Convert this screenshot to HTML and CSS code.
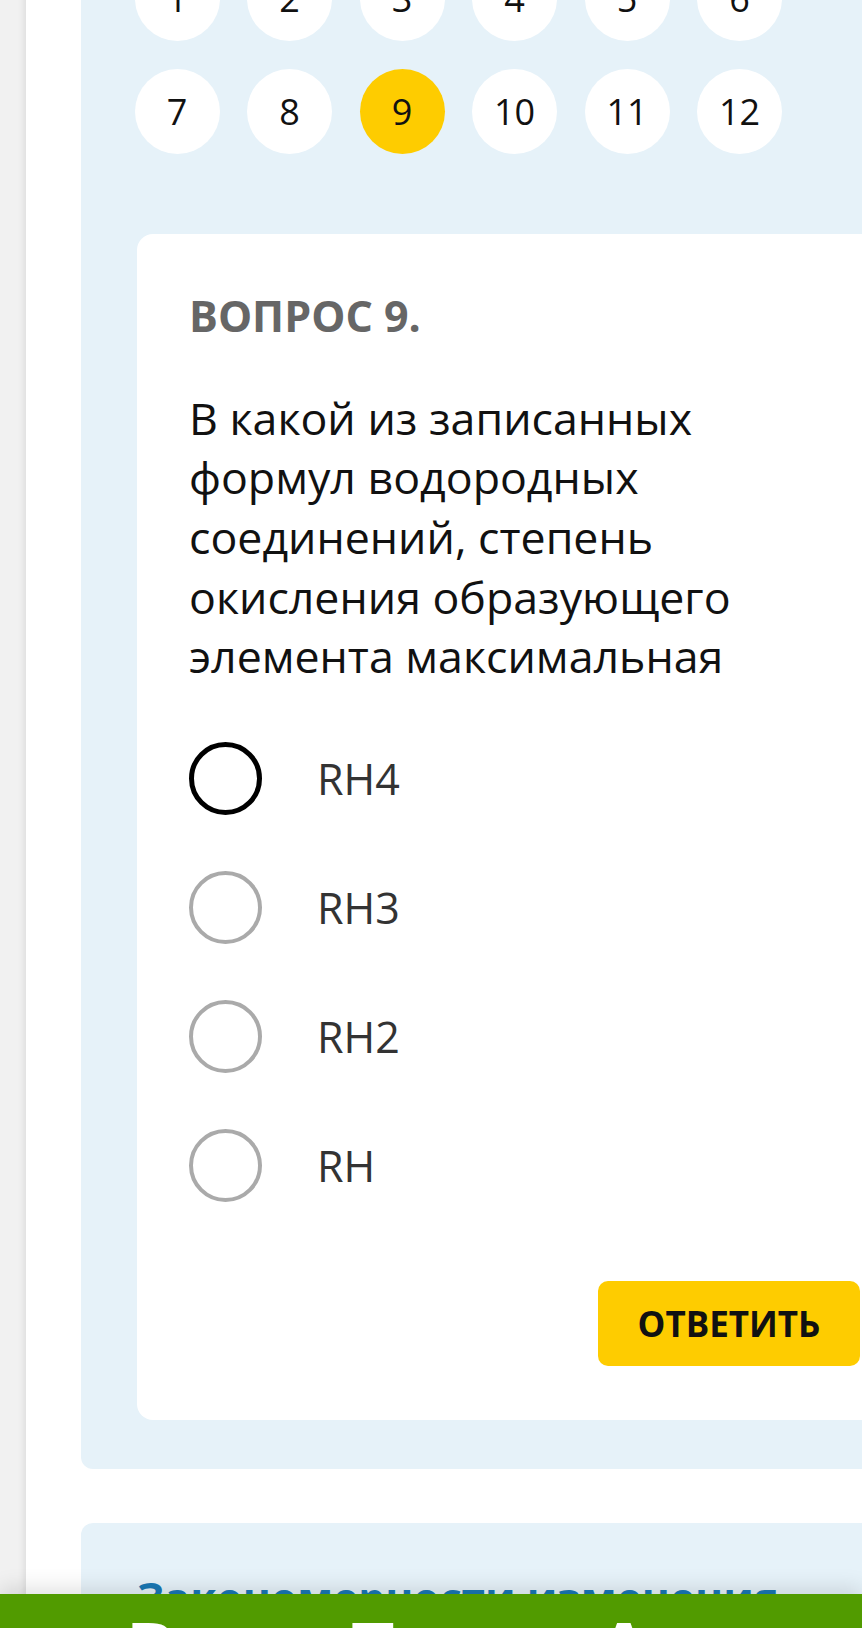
FILE: index.html
```html
<!DOCTYPE html>
<html lang="ru">
<head>
    <meta charset="UTF-8">
    <meta name="viewport" content="width=device-width, initial-scale=1.0">
    <title>Вопрос 9</title>
    <link rel="stylesheet" href="styles.css">
</head>
<body>
    <div class="page">
        <section class="quiz-panel">
            <div class="pager">
                <span class="page-num">1</span>
                <span class="page-num">2</span>
                <span class="page-num">3</span>
                <span class="page-num">4</span>
                <span class="page-num">5</span>
                <span class="page-num">6</span>
                <span class="page-num">7</span>
                <span class="page-num">8</span>
                <span class="page-num current">9</span>
                <span class="page-num">10</span>
                <span class="page-num">11</span>
                <span class="page-num">12</span>
            </div>

            <div class="question-card">
                <h2 class="question-label">ВОПРОС 9.</h2>
                <p class="question-text">В какой из записанных формул водородных соединений, степень окисления образующего элемента максимальная</p>

                <ul class="options">
                    <li class="option focused"><span class="radio"></span><span class="option-text">RH4</span></li>
                    <li class="option"><span class="radio"></span><span class="option-text">RH3</span></li>
                    <li class="option"><span class="radio"></span><span class="option-text">RH2</span></li>
                    <li class="option"><span class="radio"></span><span class="option-text">RH</span></li>
                </ul>

                <div class="actions">
                    <button class="answer-btn">ОТВЕТИТЬ</button>
                </div>
            </div>
        </section>

        <section class="topic-panel">
            <h3 class="topic-title">Закономерности изменения</h3>
        </section>
    </div>

    <nav class="bottom-bar">
        <span class="bar-item">Вход</span>
        <span class="bar-item">Поиск</span>
        <span class="bar-item">Архив</span>
        <span class="bar-item">Ещё</span>
    </nav>
</body>
</html>
```

FILE: styles.css
```css
:root {
    --panel-color: #e6f2f9;
    --accent-yellow: #fecc00;
    --text-color: #111;
    --muted-text: #666;
    --option-text: #333;
    --radio-gray: #aaa;
    --bar-green: #519b00;
    --link-blue: #1a78b4;
}

body {
    margin: 0;
    width: 862px;
    height: 1628px;
    overflow: hidden;
    background-color: #f1f1f1;
    font-family: "Open Sans", "Noto Sans", sans-serif;
    color: var(--text-color);
}

.page {
    margin-left: 26px;
    padding-left: 55px;
    width: 1000px;
    min-height: 1700px;
    background: #fff;
    box-shadow: -3px 0 6px rgba(0, 0, 0, 0.07);
}

.quiz-panel {
    width: 887px;
    margin-top: -44.5px;
    padding-bottom: 49px;
    background: var(--panel-color);
    border-radius: 0 0 12px 12px;
}

.pager {
    display: grid;
    grid-template-columns: repeat(6, 85px);
    column-gap: 27.5px;
    row-gap: 28px;
    padding-left: 53.5px;
    margin-bottom: 80.5px;
}

.page-num {
    width: 85px;
    height: 85px;
    border-radius: 50%;
    background: #fff;
    display: flex;
    align-items: center;
    justify-content: center;
    font-size: 36px;
    color: var(--text-color);
}

.page-num.current {
    background: var(--accent-yellow);
}

.question-card {
    margin-left: 56px;
    width: 671px;
    padding: 53px 52px 54px;
    background: #fff;
    border-radius: 16px;
}

.question-label {
    margin: 0;
    font-size: 43px;
    line-height: 58.8px;
    font-weight: 700;
    color: var(--muted-text);
}

.question-text {
    margin: 42px 0 0;
    max-width: 600px;
    font-size: 44.7px;
    line-height: 59.6px;
}

.options {
    list-style: none;
    margin: 56px 0 0;
    padding: 0;
    display: flex;
    flex-direction: column;
    gap: 56px;
}

.option {
    display: flex;
    align-items: center;
    height: 73px;
}

.radio {
    width: 73px;
    height: 73px;
    box-sizing: border-box;
    border: 4.5px solid var(--radio-gray);
    border-radius: 50%;
    margin-right: 55px;
    flex-shrink: 0;
}

.option.focused .radio {
    border: 5px solid #000;
}

.option-text {
    font-size: 43px;
    color: var(--option-text);
}

.actions {
    margin-top: 79.5px;
    display: flex;
    justify-content: flex-end;
}

.answer-btn {
    width: 262px;
    height: 85px;
    border: none;
    border-radius: 10px;
    background: var(--accent-yellow);
    font-family: inherit;
    font-size: 35px;
    font-weight: 700;
    color: var(--text-color);
}

.topic-panel {
    width: 887px;
    margin-top: 54px;
    padding: 46px 0 0 56px;
    box-sizing: border-box;
    height: 200px;
    background: var(--panel-color);
    border-radius: 12px;
}

.topic-title {
    margin: 0;
    font-size: 42.5px;
    font-weight: 700;
    color: var(--link-blue);
}

/* нижняя панель поверх контента */
.bottom-bar {
    position: fixed;
    left: 0;
    top: 1594px;
    width: 100%;
    height: 120px;
    display: grid;
    grid-template-columns: 220px 253px 259px auto;
    padding: 3px 0 0 126px;
    box-sizing: border-box;
    background: var(--bar-green);
    box-shadow: 0 -6px 20px rgba(0, 0, 0, 0.12);
}

.bar-item {
    font-size: 72px;
    line-height: normal;
    font-weight: 700;
    color: #fff;
    white-space: nowrap;
}
```
